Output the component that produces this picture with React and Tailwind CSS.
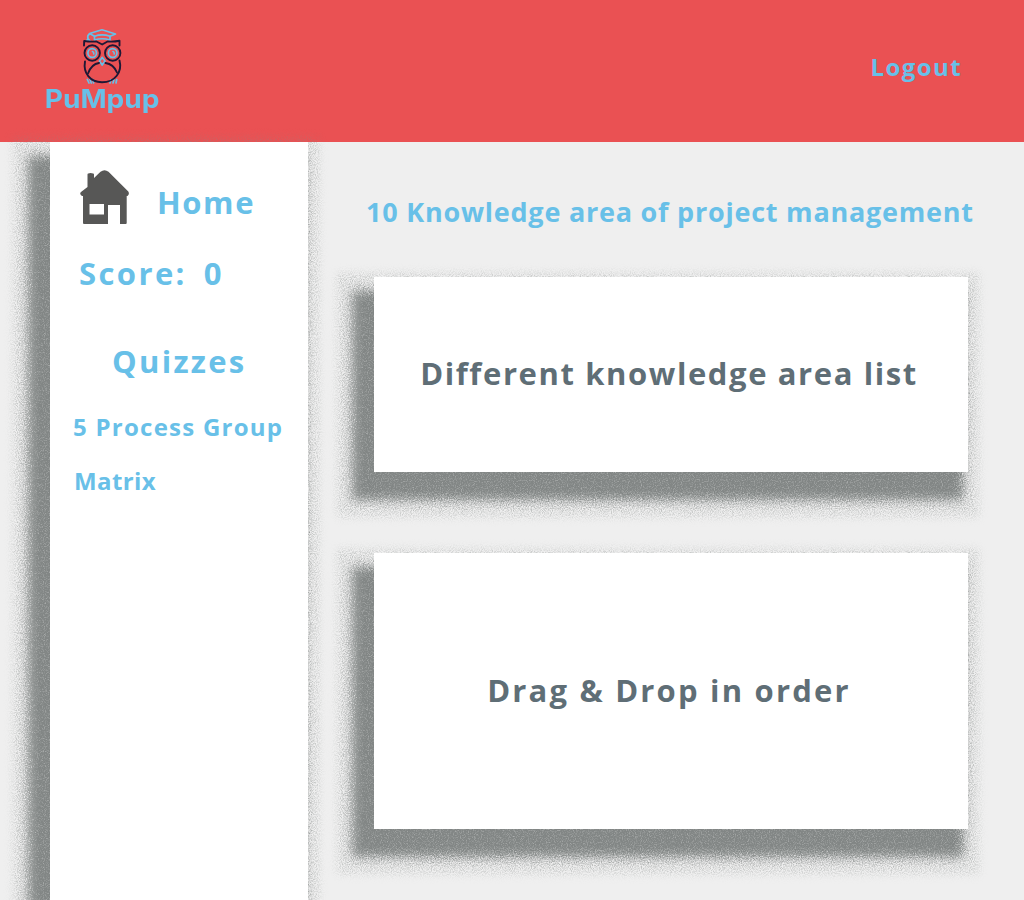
function OwlLogo() {
  return (
    <svg width="44" height="58" viewBox="0 0 44 58" fill="none" strokeLinecap="round" strokeLinejoin="round" className="block">
      <g stroke="#68c0e8" strokeWidth="1.7">
        <path d="M9.500 5.500 L22 1.800 L35.500 6 L30 8.300 Q22 5.500 14.500 8.300 Z" />
        <path d="M14.500 8.300 V12 Q22 9.500 30 12 V8.300" />
        <path d="M9.500 6 Q7 7.500 8 10.500 M8 10.500 L6.500 13.300 M8 10.500 L10 13" />
        <path d="M7.300 51.500 L9 55 M10 51.500 L11.300 55 M13 51.500 L13.500 55 M30 55 L31 51.500 M33 55 L34 51.500 M36 55 L36.700 51.500" />
        <path d="M22.200 29.500 L25 33 L22.200 37 L19.500 33 Z" />
        <circle cx="12.200" cy="25" r="4.300" />
        <circle cx="32.700" cy="25" r="4.300" />
        <path d="M12.500 23.500 Q14 24 13.800 26 M33 23.500 Q34.500 24 34.300 26" />
      </g>
      <g stroke="#1f1835" strokeWidth="1.9">
        <path d="M4 17.500 L4.200 13 Q10 14 16.500 13.500 L22.200 16.500 L27.500 13.500 Q34 14 39.500 12.800 L39.500 17.500" />
        <circle cx="12.200" cy="25" r="7.700" />
        <circle cx="32.700" cy="25" r="7.700" />
        <path d="M5 33.500 C3 45 10 54.300 22 54.300 C35 54.300 42.500 44 39.500 32.500" />
        <path d="M8 45.500 Q11.500 36 19 35 M25.500 35 Q33.500 36 37 44.500" />
      </g>
    </svg>
  );
}

function HouseIcon() {
  return (
    <svg width="50" height="54" viewBox="0 0 50 54" className="block">
      <path
        fill="#575756"
        fillRule="evenodd"
        d="M7.500 17 V4.500 Q7.500 3 10.500 3 Q14 3 14 4.500 V8 L20.500 1.800 Q24.500 -1.500 28.500 1.800 L48.300 21.500 Q49.800 24 47.500 26 H46.700 V53 Q46.700 54 45.700 54 H40 V35 H28 V54 H4 Q3 54 3 53 V26 H2 Q-1 24 1 22 Z M9.500 34 H24 V44.500 H9.500 Z"
      />
    </svg>
  );
}

function GrainFilters() {
  return (
    <svg width="0" height="0" className="absolute" aria-hidden="true">
      <filter id="grain-core" x="-50" y="-50" width="800" height="1000" filterUnits="userSpaceOnUse" colorInterpolationFilters="sRGB">
        <feGaussianBlur stdDeviation="5" result="soft" />
        <feTurbulence type="fractalNoise" baseFrequency="0.85" numOctaves="2" seed="4" result="noise" />
        <feDisplacementMap in="soft" in2="noise" scale="20" xChannelSelector="R" yChannelSelector="G" result="edge" />
        <feColorMatrix in="noise" type="matrix" values="0 0 0 0 1  0 0 0 0 1  0 0 0 0 1  0.8 0 0 0 -0.37" result="specks" />
        <feComposite in="specks" in2="edge" operator="in" result="lit" />
        <feMerge>
          <feMergeNode in="edge" />
          <feMergeNode in="lit" />
        </feMerge>
      </filter>
      <filter id="grain-halo" x="-50" y="-50" width="800" height="1000" filterUnits="userSpaceOnUse" colorInterpolationFilters="sRGB">
        <feGaussianBlur stdDeviation="4" result="soft" />
        <feTurbulence type="fractalNoise" baseFrequency="0.9" numOctaves="2" seed="9" result="noise" />
        <feColorMatrix in="noise" type="matrix" values="0 0 0 0 1  0 0 0 0 1  0 0 0 0 1  2.5 0 0 0 -0.95" result="dots" />
        <feComposite in="soft" in2="dots" operator="in" />
      </filter>
    </svg>
  );
}

function GrainShadow() {
  return (
    <>
      <div className="absolute -left-[37px] -right-[11px] -top-[4px] -bottom-[45px] bg-[#858988]/45 [filter:url(#grain-halo)]" />
      <div className="absolute -left-[22px] right-[5px] top-[14px] -bottom-[28px] bg-[#828685] [filter:url(#grain-core)]" />
    </>
  );
}

function Card({ className, children }) {
  return (
    <section className={`relative ${className}`}>
      <GrainShadow />
      <div className="relative flex h-full items-center justify-center bg-white pr-1 pb-[3px] text-[31px] leading-10 text-[#5f6e76]">
        {children}
      </div>
    </section>
  );
}

export default function App() {
  return (
    <div className="flex h-[900px] w-[1024px] flex-col overflow-hidden bg-[#efefef] font-['Open_Sans',sans-serif] font-bold whitespace-nowrap text-[#68c0e8]">
      <GrainFilters />
      <header className="flex h-[142px] shrink-0 items-start justify-between bg-[#ea5153] pl-[45px] pr-[62px]">
        <div className="flex w-[114px] flex-col items-center pt-[28px]">
          <OwlLogo />
          <span className="-mt-[3px] scale-x-110 [font-family:Inter,sans-serif] text-[25.500px] leading-8">PuMpup</span>
        </div>
        <a className="mt-[51px] text-[24px] leading-8 tracking-[1.4px]">Logout</a>
      </header>
      <div className="flex min-h-0 flex-1">
        <aside className="relative ml-[50px] w-[258px] shrink-0">
          <GrainShadow />
          <nav className="relative h-full bg-white pt-[28px]">
            <div className="flex pl-[30px]">
              <HouseIcon />
              <span className="ml-[27px] mt-[12px] text-[31px] leading-10 tracking-[1.6px]">Home</span>
            </div>
            <div className="mt-[29px] flex gap-[17px] pl-[29px] text-[31px] leading-10 tracking-[2.400px]">
              <span>Score:</span>
              <span>0</span>
            </div>
            <h2 className="mt-[48px] pl-[62px] text-[31px] leading-10 tracking-[2.300px]">Quizzes</h2>
            <ul className="mt-[30px] flex flex-col gap-[22px] pl-[23px] text-[24px] leading-8 tracking-[1.250px]">
              <li>5 Process Group</li>
              <li className="pl-px tracking-[0.400px]">Matrix</li>
            </ul>
          </nav>
        </aside>
        <main className="flex flex-1 flex-col pl-[66px]">
          <h1 className="-ml-[8px] mt-[50px] text-[27px] leading-10 tracking-[0.770px]">10 Knowledge area of project management</h1>
          <Card className="mt-[45px] h-[195px] w-[594px] shrink-0">
            <span className="tracking-[1.600px]">Different knowledge area list</span>
          </Card>
          <Card className="mt-[81px] h-[276px] w-[594px] shrink-0">
            <span className="tracking-[2.200px]">Drag &amp; Drop in order</span>
          </Card>
        </main>
      </div>
    </div>
  );
}
